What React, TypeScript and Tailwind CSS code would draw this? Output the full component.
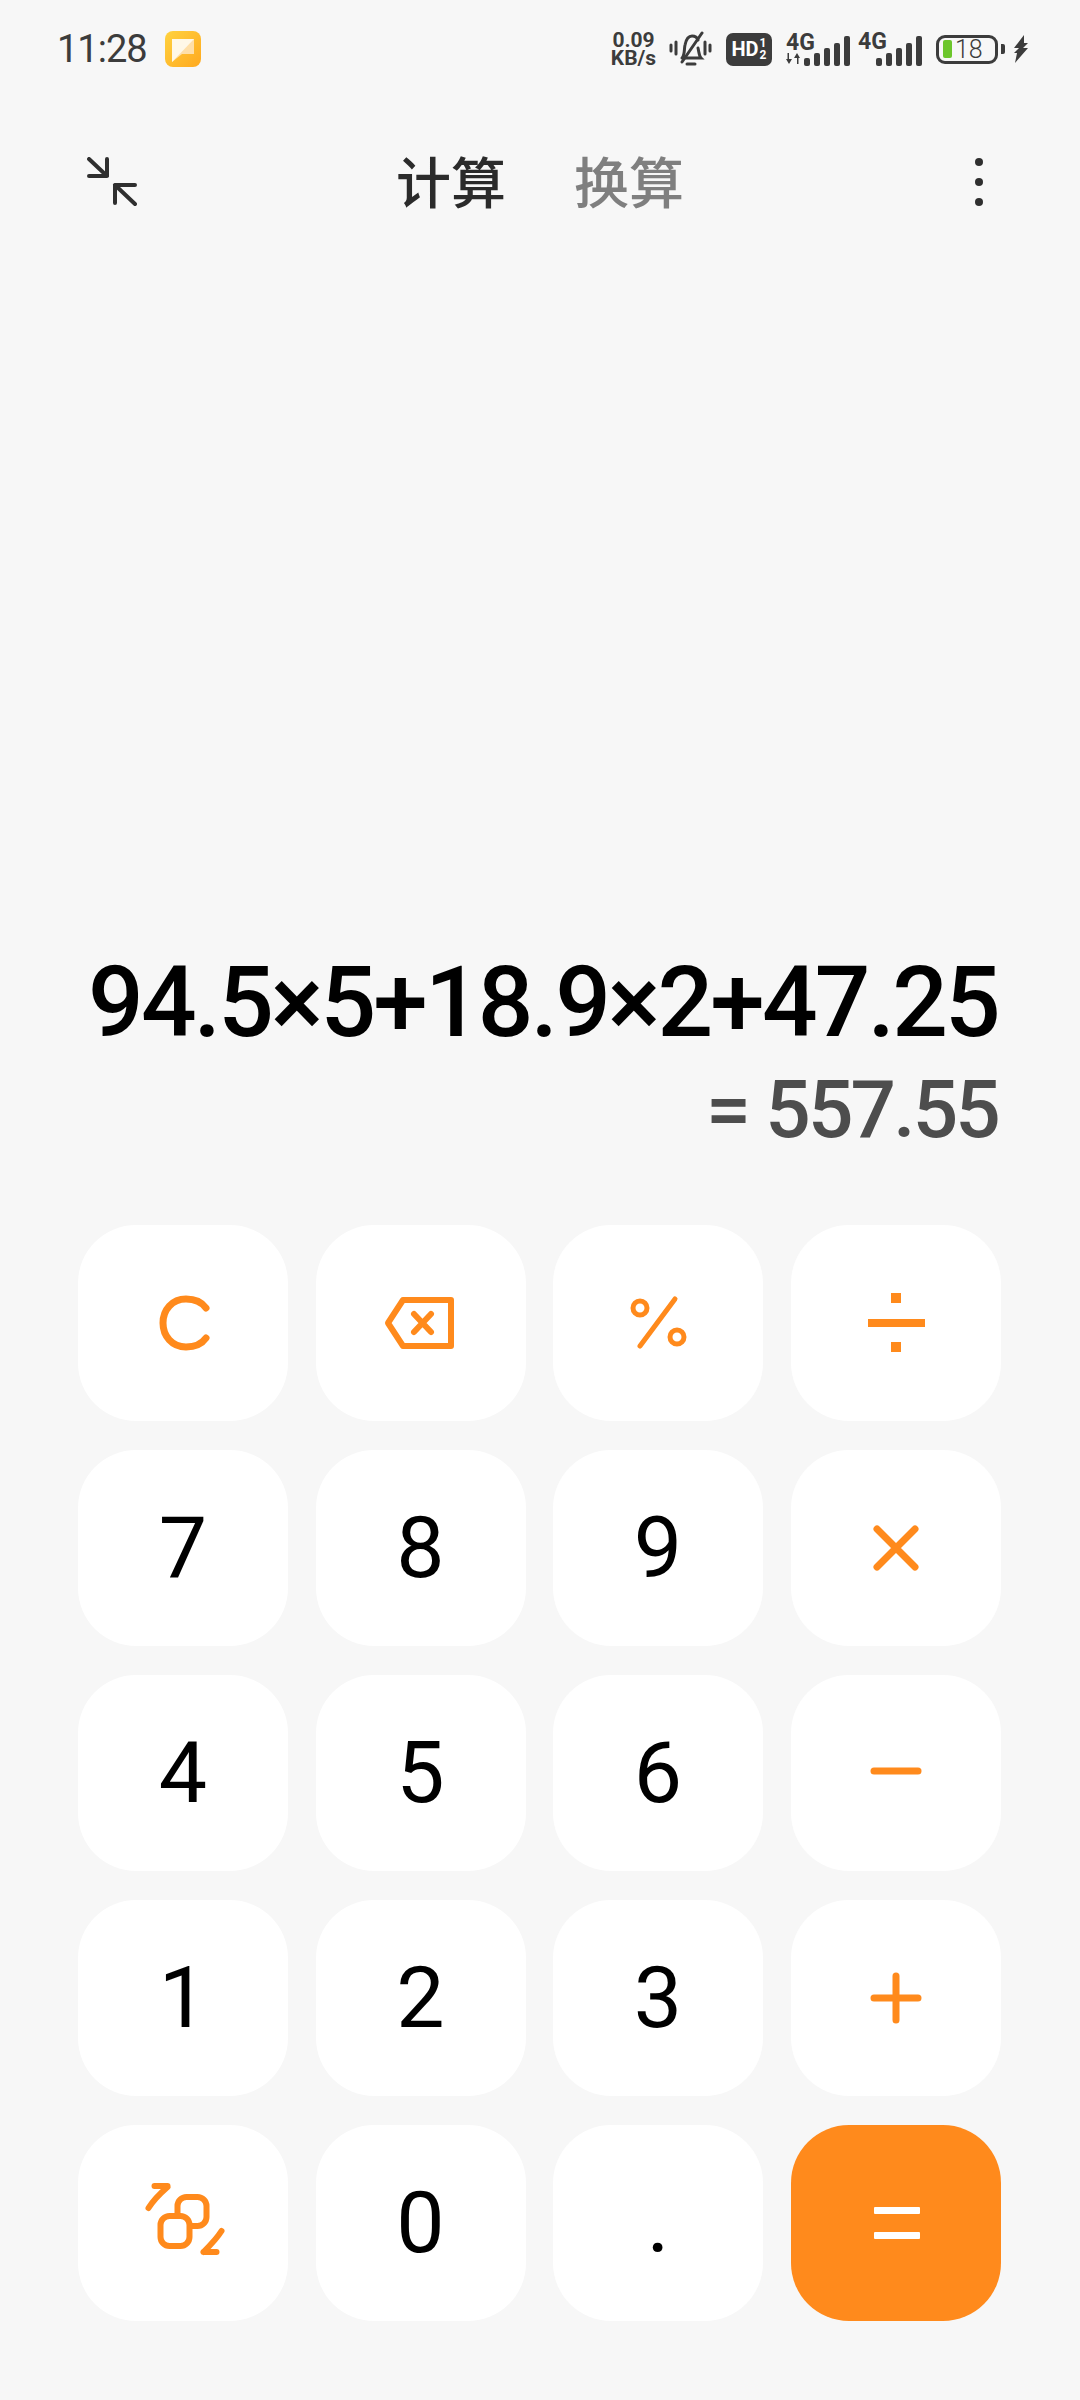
import { ReactNode } from "react";

const orange = "#FF8A1C";
const ink = "#3c3c3c";

function Key({ children, accent }: { children: ReactNode; accent?: boolean }) {
  return (
    <button
      className={`flex h-[196px] w-[210px] items-center justify-center rounded-[58px] ${
        accent ? "bg-[#FF8A1C] text-white" : "bg-white text-black"
      }`}
    >
      {children}
    </button>
  );
}

function Digit({ value }: { value: string }) {
  return <span className="text-[86px] leading-none font-normal text-black">{value}</span>;
}

function OpIcon({ children, width = 7 }: { children: ReactNode; width?: number }) {
  return (
    <svg width="100" height="100" viewBox="0 0 100 100" fill="none" stroke={orange} strokeWidth={width} strokeLinecap="round" strokeLinejoin="round">
      {children}
    </svg>
  );
}

function Bars() {
  const heights = [8, 13, 18, 23, 30];
  return (
    <div className="flex items-end gap-[4px]">
      {heights.map((h, i) => (
        <span key={i} className="w-[6px] rounded-[2px] bg-[#3c3c3c]" style={{ height: h }} />
      ))}
    </div>
  );
}

function StatusBar() {
  return (
    <div className="flex h-[98px] items-center justify-between pr-[50px] pl-[57px] text-[#3c3c3c]">
      <div className="flex items-center gap-[18px]">
        <span className="text-[38px] leading-none tracking-[-1px]">11:28</span>
        <svg width="36" height="36" viewBox="0 0 36 36">
          <defs>
            <linearGradient id="note" x1="0" y1="0" x2="1" y2="1">
              <stop offset="0" stopColor="#FFD23F" />
              <stop offset="1" stopColor="#FFA91F" />
            </linearGradient>
          </defs>
          <rect width="36" height="36" rx="8" fill="url(#note)" />
          <path d="M7 8h22v15H17l-10 8z" fill="#FFDFA8" />
          <path d="M7 8h22L7 31z" fill="#FFF8E8" />
        </svg>
      </div>
      <div className="flex items-center">
        <div className="mr-[12px] w-[47px] text-center text-[21px] leading-[18px] font-bold whitespace-pre-line">
          {"0.09\nKB/s"}
        </div>
        <svg width="43" height="36" viewBox="0 0 43 36" fill="none" stroke={ink} strokeWidth="3" strokeLinecap="round" className="mr-[14px]">
          <path d="M2 14v6M7 11v12M36 11v12M41 14v6" />
          <path d="M13 27c3-3 2-9 3-13 1-5 3-9 7-9 3 0 5 1 6 4M29 17c1 4 1 8 3 10H13M18 33h8" />
          <path d="M33 2 13 31" />
        </svg>
        <div className="mr-[14px] flex h-[33px] w-[46px] items-center justify-center gap-[1px] rounded-[7px] bg-[#3c3c3c] text-white">
          <span className="text-[20px] leading-none font-bold">HD</span>
          <span className="flex flex-col text-[12px] leading-[12px] font-bold">
            <span>1</span>
            <span>2</span>
          </span>
        </div>
        <div className="mr-[8px] flex h-[34px] w-[64px] items-end justify-between">
          <div className="flex flex-col items-start">
            <span className="text-[23px] leading-[20px] font-bold">4G</span>
            <svg width="15" height="11" viewBox="0 0 15 11" fill={ink} className="mb-[2px]">
              <path d="M3 0v6h3l-3 5-3-5h1.500V0zM11 11V5H8l3-5 3 5h-1.500v6z" />
            </svg>
          </div>
          <div className="ml-[-14px]">
            <Bars />
          </div>
        </div>
        <div className="mr-[14px] flex h-[34px] w-[64px] items-end justify-between">
          <span className="self-start text-[23px] leading-[20px] font-bold">4G</span>
          <div className="ml-[-14px]">
            <Bars />
          </div>
        </div>
        <div className="flex h-[29px] w-[62px] items-center rounded-[9px] border-[3px] border-[#3c3c3c] pl-[4px]">
          <span className="h-[18px] w-[9px] rounded-[2px] bg-[#6CC62B]" />
          <span className="ml-[3px] text-[25px] leading-none font-light">18</span>
        </div>
        <span className="mr-[8px] ml-[3px] h-[10px] w-[4px] rounded-r-[2px] bg-[#3c3c3c]" />
        <svg width="17" height="28" viewBox="0 0 17 28" fill={ink}>
          <path d="M11 0 1 13h5l-5 5h3L2 28l13-15h-5l5-5h-4z" />
        </svg>
      </div>
    </div>
  );
}

function TopBar() {
  return (
    <div className="flex h-[168px] items-center pl-[87px]">
      <svg width="50" height="50" viewBox="0 0 50 50" fill="none" stroke="#2f2f2f" strokeWidth="4" strokeLinecap="round" strokeLinejoin="round">
        <path d="M2 2 20 19M20 2v17H2M28 28l20 19M28 46V28h20" />
      </svg>
      <div className="ml-[259px] flex items-center gap-[68px] pb-[5px] text-[55px] leading-none font-medium [font-family:'Noto_Sans_CJK_SC',sans-serif]">
        <span className="text-[#2b2b2b]">计算</span>
        <span className="text-[#7f7f7f]">换算</span>
      </div>
      <div className="ml-[291px] flex flex-col gap-[12px]">
        <span className="size-[8px] rounded-full bg-[#2f2f2f]" />
        <span className="size-[8px] rounded-full bg-[#2f2f2f]" />
        <span className="size-[8px] rounded-full bg-[#2f2f2f]" />
      </div>
    </div>
  );
}

export default function App() {
  return (
    <div className="flex h-[2400px] w-[1080px] flex-col overflow-hidden bg-[#F7F7F7] [font-family:Roboto,'Liberation_Sans',sans-serif]">
      <StatusBar />
      <TopBar />

      <div className="flex flex-1 flex-col items-end justify-end pr-[82px] pb-[63px]">
        <div className="text-[98px] leading-[110px] font-medium tracking-[-2.800px] text-black">94.5×5+18.9×2+47.25</div>
        <div className="text-[80px] leading-[104px] font-medium tracking-[-2.800px] text-[#4d4d4d]">= 557.55</div>
      </div>

      <div className="grid grid-cols-[repeat(4,210px)] gap-x-[27.500px] gap-y-[29px] pb-[79px] pl-[78px]">
        <Key>
          <OpIcon>
            <path d="M73 35C68 28 61 26 53 26 39 26 30 37 30 50s9 24 23 24c8 0 15-2 20-9" />
          </OpIcon>
        </Key>
        <Key>
          <OpIcon width={6}>
            <path d="M32 27h48v46H32L17 50z" />
            <path d="M43 41l17 18M60 41 43 59" />
          </OpIcon>
        </Key>
        <Key>
          <OpIcon width={5}>
            <path d="M67 26 32 73" />
            <circle cx="32" cy="35" r="7" />
            <circle cx="69" cy="64" r="7" />
          </OpIcon>
        </Key>
        <Key>
          <OpIcon>
            <path d="M22 50h57" strokeLinecap="butt" strokeWidth="8" />
            <path d="M50 20v10M50 69v10" strokeLinecap="butt" strokeWidth="10" />
          </OpIcon>
        </Key>

        <Key><Digit value="7" /></Key>
        <Key><Digit value="8" /></Key>
        <Key><Digit value="9" /></Key>
        <Key>
          <OpIcon>
            <path d="M31 31l38 38M69 31 31 69" />
          </OpIcon>
        </Key>

        <Key><Digit value="4" /></Key>
        <Key><Digit value="5" /></Key>
        <Key><Digit value="6" /></Key>
        <Key>
          <OpIcon>
            <path d="M28 48h44" />
          </OpIcon>
        </Key>

        <Key><Digit value="1" /></Key>
        <Key><Digit value="2" /></Key>
        <Key><Digit value="3" /></Key>
        <Key>
          <OpIcon>
            <path d="M28 50h44M50 28v44" />
          </OpIcon>
        </Key>

        <Key>
          <OpIcon width={6}>
            <rect x="44.500" y="24" width="29" height="29" rx="9" />
            <rect x="27.500" y="43" width="29" height="30" rx="9" fill="#fff" />
            <path d="M15.500 35c5-8 11-14 19-21M21.500 13h13M88.500 58c-5 8-11 14-18 21M70.500 79h13" />
          </OpIcon>
        </Key>
        <Key><Digit value="0" /></Key>
        <Key><Digit value="." /></Key>
        <Key accent>
          <svg width="60" height="40" viewBox="0 0 60 40" fill="#fff">
            <rect x="8" y="4" width="46" height="7" rx="1" />
            <rect x="8" y="29" width="46" height="7" rx="1" />
          </svg>
        </Key>
      </div>
    </div>
  );
}
